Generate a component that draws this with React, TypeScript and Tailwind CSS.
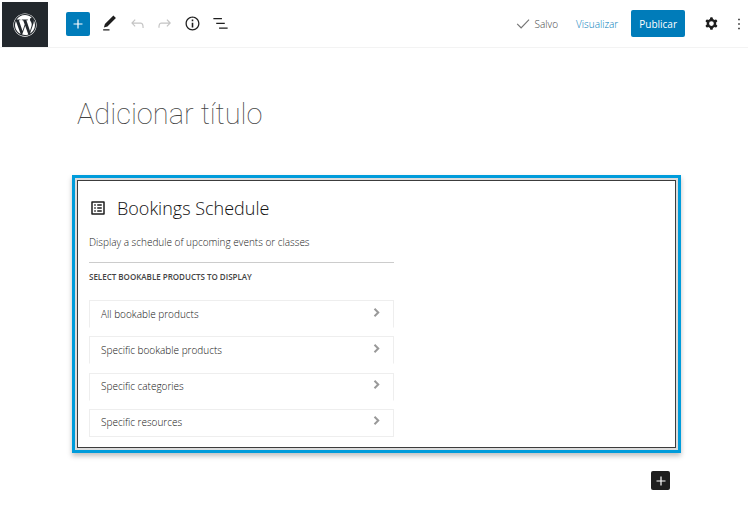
import { FaWordpress } from "react-icons/fa";
import clsx from "clsx";

const paths = {
    plus: "M18 11.2h-5.2V6h-1.6v5.2H6v1.6h5.2V18h1.6v-5.2H18z",
    edit: "M20.1 5.1L16.9 2 6.2 12.7l-1.3 4.4 4.5-1.3L20.1 5.1zM4 20.8h8v-1.5H4v1.5z",
    undo: "M18.3 11.7c-.6-.6-1.4-.9-2.3-.9H6.7l2.9-3.3-1.1-1-4.5 5L8.5 16l1-1-2.7-2.7H16c.5 0 .9.2 1.3.5 1 1 1 3.4 1 4.5v.3h1.5v-.2c0-1.5 0-4.3-1.5-5.7z",
    redo: "M15.6 6.5l-1.1 1 2.9 3.3H8c-.9 0-1.7.3-2.3.9-1.4 1.5-1.4 4.2-1.4 5.6v.2h1.5v-.3c0-1.1 0-3.5 1-4.5.3-.3.7-.5 1.3-.5h9.2L14.5 15l1.1 1.1 4.6-4.6-4.6-5z",
    info: "M12 3.2c-4.8 0-8.8 3.9-8.8 8.8 0 4.8 3.9 8.8 8.8 8.8 4.8 0 8.8-3.9 8.8-8.8 0-4.8-4-8.8-8.8-8.8zm0 16c-4 0-7.2-3.3-7.2-7.2C4.8 8 8 4.8 12 4.8s7.2 3.3 7.2 7.2c0 4-3.2 7.2-7.2 7.2zM11 17h2v-6h-2v6zm0-8h2V7h-2v2z",
    outline: "M13.8 5.2H3v1.5h10.8V5.2zm-3.6 12v1.5H21v-1.5H10.2zm7.2-6H6.6v1.5h10.8v-1.5z",
    check: "M9 18.6L3.5 13l1-1L9 16.4l9.5-9.9 1 1z",
    cog: "M10.289 4.836A1 1 0 0111.275 4h1.306a1 1 0 01.987.836l.244 1.466c.787.26 1.503.679 2.108 1.218l1.393-.522a1 1 0 011.216.437l.653 1.13a1 1 0 01-.23 1.273l-1.148.944a6.025 6.025 0 010 2.435l1.149.946a1 1 0 01.23 1.272l-.653 1.13a1 1 0 01-1.216.437l-1.394-.522c-.605.54-1.32.958-2.108 1.218l-.244 1.466a1 1 0 01-.987.836h-1.306a1 1 0 01-.986-.836l-.244-1.466a5.995 5.995 0 01-2.108-1.218l-1.394.522a1 1 0 01-1.217-.436l-.653-1.131a1 1 0 01.23-1.272l1.149-.946a6.026 6.026 0 010-2.435l-1.148-.944a1 1 0 01-.23-1.272l.653-1.131a1 1 0 011.217-.437l1.393.522a5.994 5.994 0 012.108-1.218l.244-1.466zM14.929 12a3 3 0 11-6 0 3 3 0 016 0z",
    more: "M13 19h-2v-2h2v2zm0-6h-2v-2h2v2zm0-6h-2V5h2v2z",
    list: "M19 5v14H5V5h14m1.1-2H3.9c-.5 0-.9.4-.9.9v16.2c0 .4.4.9.9.9h16.2c.4 0 .9-.5.9-.9V3.9c0-.5-.5-.9-.9-.9zM11 7h6v2h-6V7zm0 4h6v2h-6v-2zm0 4h6v2h-6zM7 7h2v2H7zm0 4h2v2H7zm0 4h2v2H7z",
    chevron: "M7 17.600L12.600 12 7 6.400 9.600 3.800 17.800 12 9.600 20.200z",
};

function Icon({name, className}: {name: keyof typeof paths, className?: string})
{
    return <svg viewBox="0 0 24 24" className={clsx("shrink-0", className)} fill="currentColor" fillRule="evenodd" aria-hidden="true">
        <path d={paths[name]}/>
    </svg>;
}

const tools = [
    {name: "edit", label: "Ferramentas"},
    {name: "undo", label: "Desfazer", disabled: true},
    {name: "redo", label: "Refazer", disabled: true},
    {name: "info", label: "Detalhes"},
    {name: "outline", label: "Estrutura"},
] as const;

const options = [
    "All bookable products",
    "Specific bookable products",
    "Specific categories",
    "Specific resources",
];

function Header()
{
    return <header className="flex items-center h-12 pl-[2px] border-b border-[#f3f3f3]">
        <a href="#" aria-label="WordPress" className="flex items-center justify-center w-[46px] h-[45px] mt-[2px] bg-[#23282d] text-white">
            <FaWordpress className="size-6"/>
        </a>
        <button aria-label="Adicionar bloco" className="flex items-center justify-center size-6 ml-[18px] mr-[6px] rounded-[2px] bg-[#007cba] text-white">
            <Icon name="plus" className="size-[18px]"/>
        </button>
        <div className="grid grid-cols-5 w-[138px]">
            {tools.map((tool) =>
                <button
                    key={tool.name}
                    aria-label={tool.label}
                    disabled={"disabled" in tool}
                    className="flex items-center justify-center h-6 text-[#1e1e1e] disabled:text-[#c4c4c4]"
                >
                    <Icon name={tool.name} className="size-[19px]"/>
                </button>
            )}
        </div>
        <div className="flex items-center ml-auto text-[10px] leading-4">
            <Icon name="check" className="size-[19px] mr-[2px] text-[#757575]"/>
            <span className="font-light text-[#444]">Salvo</span>
            <a href="#" className="ml-[18px] text-[#007cba] font-light">Visualizar</a>
            <button className="h-[27px] px-2 ml-[13px] rounded-[2px] bg-[#007cba] text-white font-medium">Publicar</button>
            <button aria-label="Configurações" className="ml-[17px] text-[#1e1e1e]"><Icon name="cog" className="size-[19px]"/></button>
            <button aria-label="Opções" className="ml-[9px] text-[#1e1e1e]"><Icon name="more" className="size-[18px]"/></button>
        </div>
    </header>;
}

function BookingsBlock()
{
    return <section className="border-[3px] border-[#009cdb] p-[2px] bg-[#dcdcdc] shadow-[0_3px_5px_rgba(0,0,0,0.25)]">
        <div className="border border-[#3c3c3c] bg-white px-[11px] pt-[15px] pb-[10px]">
            <div className="w-[305px]">
                <div className="flex items-center gap-[10px] h-6 text-[#1e1e1e]">
                    <Icon name="list" className="size-[18px]"/>
                    <h2 className="text-[18px] leading-6 font-light text-[#111]">Bookings Schedule</h2>
                </div>
                <p className="mt-[14px] pb-[12px] border-b border-[#ccc] text-[10px] leading-4 font-light text-[#222]">
                    Display a schedule of upcoming events or classes
                </p>
                <h3 className="mt-[6px] mb-[15px] text-[8px] leading-4 font-semibold uppercase text-[#444]">
                    Select bookable products to display
                </h3>
                <ul className="flex flex-col justify-between h-[137px]">
                    {options.map((option) =>
                        <li key={option} className="group">
                            <button className="flex items-center justify-between w-full h-7 pl-[11px] pr-[10px] border border-b-transparent group-last:border-b-[#eee] border-[#eee] text-[10px] font-light text-[#111]">
                                {option}
                                <Icon name="chevron" className="size-[13px] mb-1 text-[#999]"/>
                            </button>
                        </li>
                    )}
                </ul>
            </div>
        </div>
    </section>;
}

export default function App()
{
    return <div className="bg-white font-['Open_Sans','Noto_Sans',sans-serif]">
        <Header/>
        <main className="pl-[72px] pr-[67px]">
            <input
                aria-label="Adicionar título"
                placeholder="Adicionar título"
                className="block w-full h-10 mt-[47px] mb-10 pl-[5px] outline-none font-['Roboto',sans-serif] font-thin text-[29px] placeholder:text-[#444]"
            />
            <BookingsBlock/>
            <div className="flex justify-end mt-[18px] pr-[11px]">
                <button aria-label="Adicionar bloco" className="flex items-center justify-center size-[19px] rounded-[2px] bg-[#1e1e1e] text-white">
                    <Icon name="plus" className="size-[18px]"/>
                </button>
            </div>
        </main>
    </div>;
}
